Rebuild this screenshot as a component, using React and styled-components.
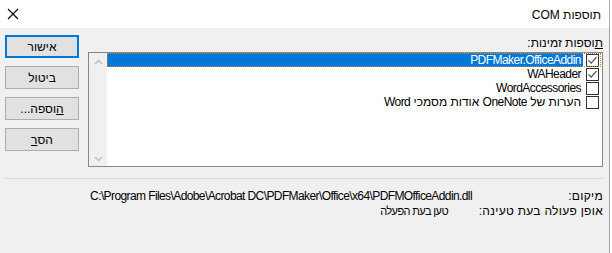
import React from "react";
import styled, { createGlobalStyle } from "styled-components";

const Global = createGlobalStyle`
  html, body { margin: 0; padding: 0; background: #ffffff; }
  body { font-family: "Liberation Sans", Arial, sans-serif; font-size: 12px; color: #000; }
  #root { width: 612px; height: 253px; }
`;

const Window = styled.div`
  width: 610px;
  height: 253px;
  box-sizing: border-box;
  border-right: 1px solid #a8a8a8;
  display: flex;
  flex-direction: column;
  background: #f0f0f0;
`;

const TitleBar = styled.div`
  height: 28px;
  flex: none;
  background: #ffffff;
  display: flex;
  align-items: center;
  justify-content: space-between;
  padding: 0 8px 0 7px;
`;

const Title = styled.div`
  direction: rtl;
  font-size: 12px;
  padding-top: 1px;
`;

const CloseBtn = styled.svg`
  width: 12px;
  height: 12px;
  display: block;
`;

const Body = styled.div`
  flex: 1;
  display: flex;
  flex-direction: column;
  padding: 7px 6px 0 5px;
`;

const Top = styled.div`
  display: flex;
  gap: 9px;
`;

const Buttons = styled.div`
  display: flex;
  flex-direction: column;
  gap: 8px;
`;

const Button = styled.button`
  width: 74px;
  height: 23px;
  box-sizing: border-box;
  background: #e1e1e1;
  border: ${(p) => (p.$default ? "2px solid #0078d7" : "1px solid #adadad")};
  font-family: "Liberation Sans", Arial, sans-serif;
  font-size: 12px;
  color: #000;
  direction: rtl;
  padding: 0;
  display: flex;
  align-items: center;
  justify-content: center;
`;

const Accel = styled.span`
  text-decoration: underline;
  text-underline-offset: 1px;
`;

const Latin = styled.span`
  letter-spacing: -0.55px;
`;

const Main = styled.div`
  flex: 1;
  display: flex;
  flex-direction: column;
`;

const ListLabel = styled.div`
  direction: rtl;
  height: 17px;
  line-height: 17px;
`;

const ListBox = styled.div`
  height: 115px;
  box-sizing: border-box;
  border: 1px solid #828790;
  background: #fff;
  display: flex;
`;

const ScrollBar = styled.div`
  width: 18px;
  background: #f0f0f0;
  display: flex;
  flex-direction: column;
  justify-content: space-between;
  align-items: center;
  padding: 6px 0 4px;
`;

const Chevron = styled.svg`
  width: 9px;
  height: 6px;
  display: block;
`;

const Items = styled.div`
  flex: 1;
  display: flex;
  flex-direction: column;
  padding-right: 1px;
`;

const Item = styled.div`
  height: 14px;
  display: flex;
  flex-direction: row-reverse;
  align-items: center;
  box-sizing: border-box;
  outline: ${(p) => (p.$focused ? "1px dotted #d08030" : "none")};
  outline-offset: -1px;
`;

const CheckBox = styled.span`
  width: 13px;
  height: 13px;
  box-sizing: border-box;
  border: 1px solid #333;
  background: #fff;
  margin: 0 2px 0 3px;
  flex: none;
  display: flex;
  align-items: center;
  justify-content: center;
`;

const ItemText = styled.span`
  flex: ${(p) => (p.$selected ? 1 : "none")};
  height: 14px;
  line-height: 14px;
  direction: rtl;
  text-align: right;
  padding-right: 2px;
  background: ${(p) => (p.$selected ? "#0078d7" : "transparent")};
  color: ${(p) => (p.$selected ? "#fff" : "#000")};
  white-space: nowrap;
`;

const Separator = styled.div`
  height: 1px;
  background: #dadada;
  margin: 11px 0 0 0;
`;

const Info = styled.div`
  display: flex;
  flex-direction: column;
  gap: 0px;
  padding-top: 10px;
`;

const InfoRow = styled.div`
  display: flex;
  flex-direction: row-reverse;
  align-items: center;
  height: 15px;
  line-height: 15px;
`;

const InfoLabel = styled.span`
  direction: rtl;
  width: ${(p) => p.$w}px;
  flex: none;
  text-align: right;
  letter-spacing: 0.3px;
`;

const PathValue = styled.span`
  direction: ltr;
  white-space: nowrap;
  letter-spacing: -0.6px;
`;

const StatusValue = styled.span`
  direction: rtl;
  white-space: nowrap;
  font-size: 11px;
  letter-spacing: -0.6px;
`;

const Check = () => (
  <svg width="11" height="11" viewBox="0 0 11 11">
    <path d="M1.5 5.5 L4.2 8.2 L9.5 2" fill="none" stroke="#555" strokeWidth="1.2" />
  </svg>
);

const items = [
  { key: "pdf", text: <Latin>PDFMaker.OfficeAddin</Latin>, checked: true, selected: true },
  { key: "wah", text: <Latin>WAHeader</Latin>, checked: true },
  { key: "wac", text: <Latin>WordAccessories</Latin>, checked: false },
  {
    key: "one",
    text: (
      <>
        הערות של <Latin>OneNote</Latin> אודות מסמכי <Latin>Word</Latin>
      </>
    ),
    checked: false,
  },
];

export default function App() {
  return (
    <>
      <Global />
      <Window>
        <TitleBar>
          <CloseBtn viewBox="0 0 12 12">
            <path d="M1 1 L11 11 M11 1 L1 11" stroke="#000" strokeWidth="1.1" />
          </CloseBtn>
          <Title>תוספות COM</Title>
        </TitleBar>
        <Body>
          <Top>
            <Buttons>
              <Button $default>אישור</Button>
              <Button>ביטול</Button>
              <Button><Accel>ה</Accel>וספה...</Button>
              <Button>הס<Accel>ר</Accel></Button>
            </Buttons>
            <Main>
              <ListLabel><Accel>ת</Accel>וספות זמינות:</ListLabel>
              <ListBox>
                <ScrollBar>
                  <Chevron viewBox="0 0 9 6">
                    <path d="M1 5 L4.5 1.5 L8 5" fill="none" stroke="#c2c2c2" strokeWidth="1.6" />
                  </Chevron>
                  <Chevron viewBox="0 0 9 6">
                    <path d="M1 1 L4.5 4.5 L8 1" fill="none" stroke="#c2c2c2" strokeWidth="1.6" />
                  </Chevron>
                </ScrollBar>
                <Items>
                  {items.map((it) => (
                    <Item key={it.key} $focused={it.selected}>
                      <CheckBox>{it.checked && <Check />}</CheckBox>
                      <ItemText $selected={it.selected}>{it.text}</ItemText>
                    </Item>
                  ))}
                </Items>
              </ListBox>
            </Main>
          </Top>
          <Separator />
          <Info>
            <InfoRow>
              <InfoLabel $w={131}>מיקום:</InfoLabel>
              <PathValue>C:\Program Files\Adobe\Acrobat DC\PDFMaker\Office\x64\PDFMOfficeAddin.dll</PathValue>
            </InfoRow>
            <InfoRow>
              <InfoLabel $w={155}>אופן פעולה בעת טעינה:</InfoLabel>
              <StatusValue>טען בעת הפעלה</StatusValue>
            </InfoRow>
          </Info>
        </Body>
      </Window>
    </>
  );
}
